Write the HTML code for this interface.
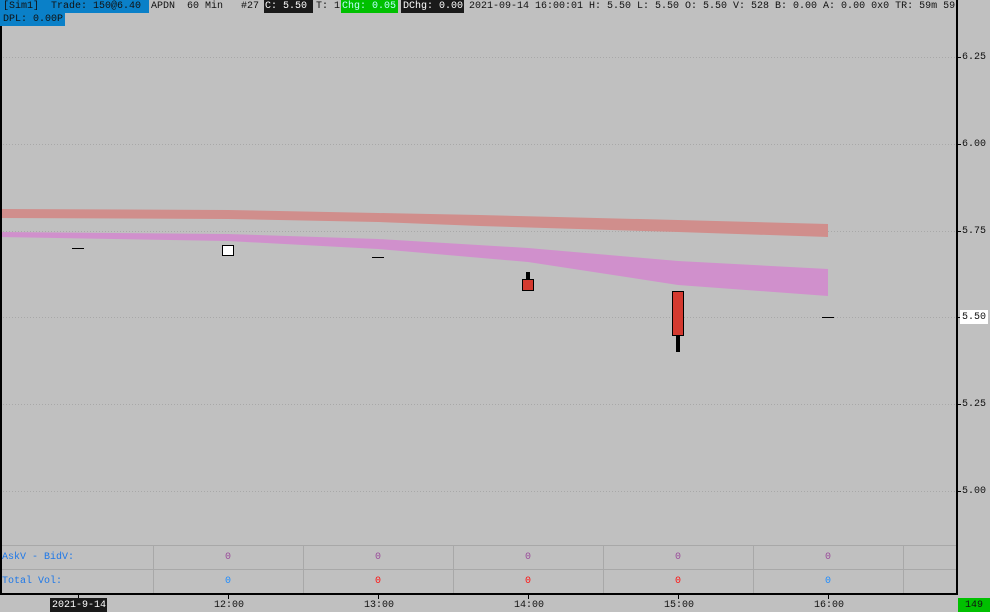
<!DOCTYPE html>
<html><head><style>
html,body{margin:0;padding:0;background:#c0c0c0;}
body{width:990px;height:612px;position:relative;overflow:hidden;font-family:"Liberation Mono",monospace;font-size:10px;color:#111;}
.t{position:absolute;white-space:pre;line-height:13px;}
#hdr{position:absolute;left:0;top:0;width:956px;height:30px;overflow:hidden;}
</style></head><body>
<svg width="990" height="612" style="position:absolute;left:0;top:0" xmlns="http://www.w3.org/2000/svg">
<rect width="990" height="612" fill="#c0c0c0"/>
<g stroke="#a8a8a8" stroke-dasharray="1,2" stroke-width="1">
<line x1="0" y1="57.5" x2="957" y2="57.5"/>
<line x1="0" y1="144.5" x2="957" y2="144.5"/>
<line x1="0" y1="231.5" x2="957" y2="231.5"/>
<line x1="0" y1="317.5" x2="957" y2="317.5"/>
<line x1="0" y1="404.5" x2="957" y2="404.5"/>
<line x1="0" y1="491.5" x2="957" y2="491.5"/>
</g>
<polygon fill="#d08e8c" points="0,209 228,210 378,213 480,215 678,220 828,224 828,237 678,232 480,226 378,222 228,219 0,218"/>
<polygon fill="#d090cc" points="0,232 228,234 378,239 528,248 678,261 828,269 828,296 678,285 528,262 378,249 228,241 0,237"/>
<g stroke="#000" stroke-width="1">
<line x1="72" y1="248.5" x2="84" y2="248.5"/>
<line x1="372" y1="257.5" x2="384" y2="257.5"/>
<line x1="822" y1="317.5" x2="834" y2="317.5"/>
</g>
<rect x="222.5" y="245.5" width="11" height="10" fill="#fff" stroke="#000"/>
<rect x="526" y="272" width="4" height="8" fill="#000"/>
<rect x="522.5" y="279.5" width="11" height="11" fill="#d43a30" stroke="#000"/>
<rect x="676" y="334" width="4" height="18" fill="#000"/>
<rect x="672.5" y="291.5" width="11" height="44" fill="#d43a30" stroke="#000"/>
<g stroke="#a8a8a8" stroke-width="1">
<line x1="0" y1="545.5" x2="957" y2="545.5"/>
<line x1="0" y1="569.5" x2="957" y2="569.5"/>
<line x1="153.5" y1="545" x2="153.5" y2="593"/>
<line x1="303.5" y1="545" x2="303.5" y2="593"/>
<line x1="453.5" y1="545" x2="453.5" y2="593"/>
<line x1="603.5" y1="545" x2="603.5" y2="593"/>
<line x1="753.5" y1="545" x2="753.5" y2="593"/>
<line x1="903.5" y1="545" x2="903.5" y2="593"/>
</g>
<g stroke="#000" stroke-width="2">
<line x1="957" y1="0" x2="957" y2="595"/>
<line x1="0" y1="594" x2="958" y2="594"/>
<line x1="1" y1="0" x2="1" y2="594"/>
</g>
<g stroke="#000" stroke-width="1">
<line x1="78.5" y1="594" x2="78.5" y2="599"/>
<line x1="228.5" y1="594" x2="228.5" y2="599"/>
<line x1="378.5" y1="594" x2="378.5" y2="599"/>
<line x1="528.5" y1="594" x2="528.5" y2="599"/>
<line x1="678.5" y1="594" x2="678.5" y2="599"/>
<line x1="828.5" y1="594" x2="828.5" y2="599"/>
<line x1="957" y1="57.5" x2="961" y2="57.5"/>
<line x1="957" y1="144.5" x2="961" y2="144.5"/>
<line x1="957" y1="231.5" x2="961" y2="231.5"/>
<line x1="957" y1="317.5" x2="961" y2="317.5"/>
<line x1="957" y1="404.5" x2="961" y2="404.5"/>
<line x1="957" y1="491.5" x2="961" y2="491.5"/>
</g>
<rect x="960" y="310" width="28" height="14" fill="#fff"/>
<rect x="50" y="598" width="57" height="14" fill="#1a1a1a"/>
<rect x="958" y="598" width="32" height="14" fill="#00c000"/>
<rect x="0" y="0" width="149" height="13" fill="#0a80c8"/>
<rect x="0" y="13" width="65" height="13" fill="#0a80c8"/>
<rect x="264" y="0" width="49" height="13" fill="#1a1a1a"/>
<rect x="341" y="0" width="57" height="13" fill="#00c000"/>
<rect x="401" y="0" width="63" height="13" fill="#1a1a1a"/>
</svg>
<div id="hdr">
<div class="t" style="left:3px;top:0">[Sim1]  Trade: 150@6.40</div>
<div class="t" style="left:151px;top:0">APDN  60 Min</div>
<div class="t" style="left:241px;top:0">#27</div>
<div class="t" style="left:265px;top:0;color:#fff">C: 5.50</div>
<div class="t" style="left:316px;top:0">T: 1</div>
<div class="t" style="left:342px;top:0;color:#bff">Chg: 0.05</div>
<div class="t" style="left:403px;top:0;color:#fff">DChg: 0.00</div>
<div class="t" style="left:469px;top:0">2021-09-14 16:00:01 H: 5.50 L: 5.50 O: 5.50 V: 528 B: 0.00 A: 0.00 0x0 TR: 59m 59s</div>
<div class="t" style="left:3px;top:13px">DPL: 0.00P</div>
</div>
<div class="t" style="left:962px;top:51px">6.25</div>
<div class="t" style="left:962px;top:138px">6.00</div>
<div class="t" style="left:962px;top:225px">5.75</div>
<div class="t" style="left:962px;top:311px">5.50</div>
<div class="t" style="left:962px;top:398px">5.25</div>
<div class="t" style="left:962px;top:485px">5.00</div>
<div class="t" style="left:2px;top:551px;color:#1e78e8">AskV - BidV:</div>
<div class="t" style="left:2px;top:575px;color:#1e78e8">Total Vol:</div>
<div class="t" style="left:225px;top:551px;color:#9a4a9a">0</div>
<div class="t" style="left:375px;top:551px;color:#9a4a9a">0</div>
<div class="t" style="left:525px;top:551px;color:#9a4a9a">0</div>
<div class="t" style="left:675px;top:551px;color:#9a4a9a">0</div>
<div class="t" style="left:825px;top:551px;color:#9a4a9a">0</div>
<div class="t" style="left:225px;top:575px;color:#1e8cff">0</div>
<div class="t" style="left:375px;top:575px;color:#ff1010">0</div>
<div class="t" style="left:525px;top:575px;color:#ff1010">0</div>
<div class="t" style="left:675px;top:575px;color:#ff1010">0</div>
<div class="t" style="left:825px;top:575px;color:#1e8cff">0</div>
<div class="t" style="left:52px;top:599px;color:#fff">2021-9-14</div>
<div class="t" style="left:214px;top:599px">12:00</div>
<div class="t" style="left:364px;top:599px">13:00</div>
<div class="t" style="left:514px;top:599px">14:00</div>
<div class="t" style="left:664px;top:599px">15:00</div>
<div class="t" style="left:814px;top:599px">16:00</div>
<div class="t" style="left:965px;top:599px">149</div>
</body></html>
